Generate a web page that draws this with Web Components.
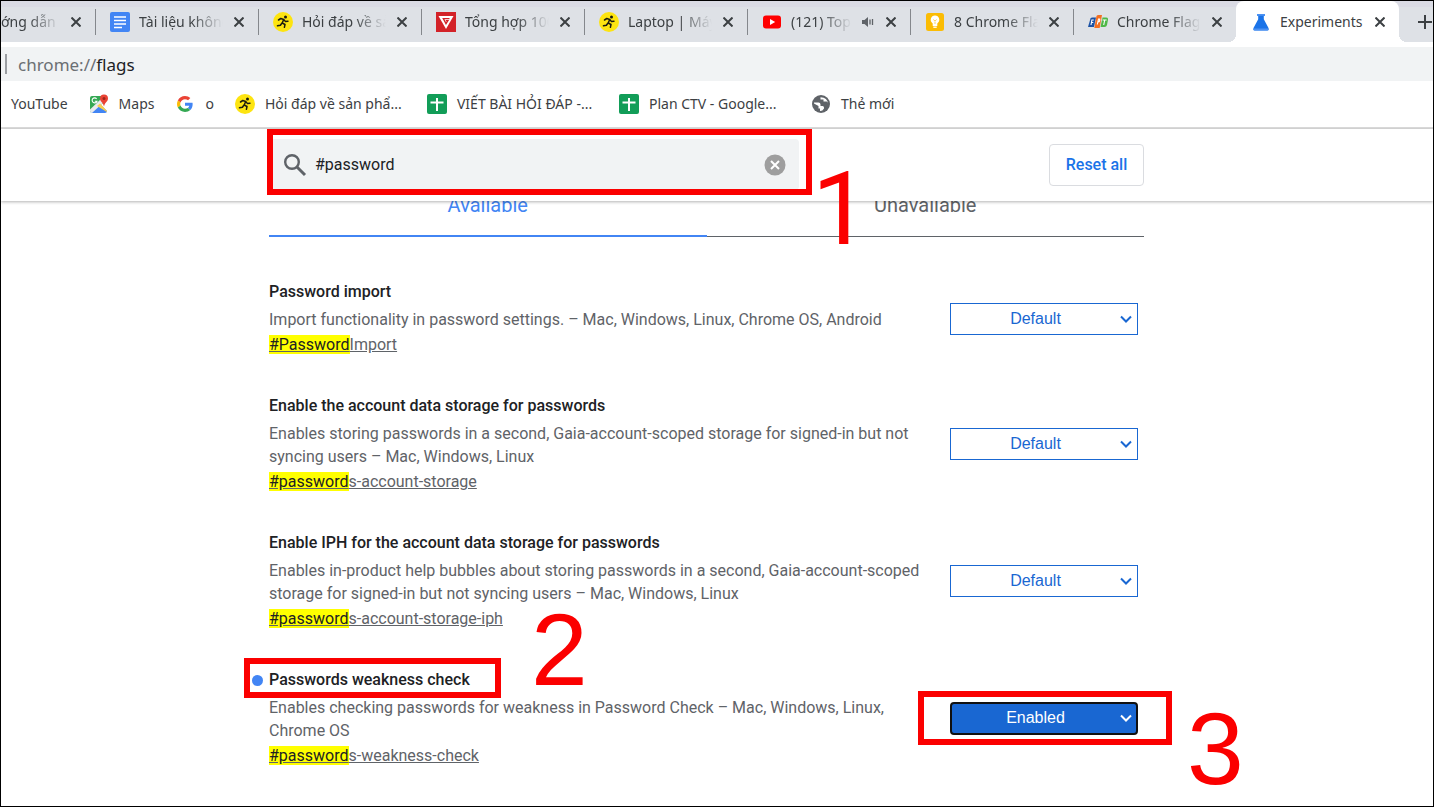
<!DOCTYPE html>
<html lang="vi">
<head>
<meta charset="utf-8">
<title>Experiments</title>
<style>
  html, body { margin: 0; height: 100%; }
  body { font-family: "Noto Sans", "Open Sans", sans-serif; font-size: 14px; color: #3c4043; background: #fff; }
</style>
</head>
<body>
<browser-window>
  <tab-strip slot="tabs">
    <browser-tab class="cut" cut>ớng dẫn t</browser-tab>
    <browser-tab icon="docs">Tài liệu không</browser-tab>
    <browser-tab icon="runner">Hỏi đáp về sản</browser-tab>
    <browser-tab icon="shield">Tổng hợp 100</browser-tab>
    <browser-tab icon="runner">Laptop | Máy tính</browser-tab>
    <browser-tab icon="youtube" audio>(121) Top</browser-tab>
    <browser-tab icon="bulb">8 Chrome Flags</browser-tab>
    <browser-tab icon="fpt">Chrome Flags</browser-tab>
    <browser-tab icon="flask" active>Experiments</browser-tab>
  </tab-strip>
  <address-bar slot="address" scheme="chrome://" host="flags"></address-bar>
  <bookmark-bar slot="bookmarks">
    <bookmark-link>YouTube</bookmark-link>
    <bookmark-link icon="maps">Maps</bookmark-link>
    <bookmark-link icon="google">o</bookmark-link>
    <bookmark-link icon="runner" wide>Hỏi đáp về sản phẩ...</bookmark-link>
    <bookmark-link icon="sheets" wide>VIẾT BÀI HỎI ĐÁP -...</bookmark-link>
    <bookmark-link icon="sheets" wide>Plan CTV - Google...</bookmark-link>
    <bookmark-link icon="globe">Thẻ mới</bookmark-link>
  </bookmark-bar>
  <flags-page>
    <flag-row heading="Password import" match="#Password" rest="Import" value="Default">Import functionality in password settings. – Mac, Windows, Linux, Chrome OS, Android</flag-row>
    <flag-row heading="Enable the account data storage for passwords" match="#password" rest="s-account-storage" value="Default">Enables storing passwords in a second, Gaia-account-scoped storage for signed-in but not syncing users – Mac, Windows, Linux</flag-row>
    <flag-row heading="Enable IPH for the account data storage for passwords" match="#password" rest="s-account-storage-iph" value="Default">Enables in-product help bubbles about storing passwords in a second, Gaia-account-scoped storage for signed-in but not syncing users – Mac, Windows, Linux</flag-row>
    <flag-row heading="Passwords weakness check" match="#password" rest="s-weakness-check" value="Enabled" changed>Enables checking passwords for weakness in Password Check – Mac, Windows, Linux, Chrome OS</flag-row>
  </flags-page>
</browser-window>

<script>
const ICONS = {
  docs: `<rect width="20" height="20" rx="2" fill="#4285f4"/><path d="M4 5h12M4 8.500h12M4 12h12M4 15.500h8" stroke="#fff" stroke-width="1.700"/>`,
  runner: `<circle cx="10" cy="10" r="10" fill="#fde410"/><circle cx="12.500" cy="5" r="1.500" fill="#1b1b10"/><path d="M5.500 8 7.800 6.500l2.900 1-1.500 3.500 2.800 1.500-.6 2.800M9 11 7.400 13.300 4.500 13.800M10.900 7.600l1.600 2 2.500-.4" fill="none" stroke="#1b1b10" stroke-width="1.500" stroke-linejoin="round" stroke-linecap="round"/>`,
  shield: `<rect width="20" height="20" fill="#d32228"/><path d="M2.500 4h15L10 17z" fill="#fff"/><path d="M13.500 6.600H7.300l2.700 5 1.900-3H9.800" fill="none" stroke="#d32228" stroke-width="1.300"/>`,
  youtube: `<rect x="1" y="3.500" width="18" height="13" rx="3" fill="#f00"/><path d="m8 7 5.200 3L8 13z" fill="#fff"/>`,
  bulb: `<rect x="1" y="1" width="18" height="18" rx="2.500" fill="#fbbc04"/><path d="M10 3.500a4.300 4.300 0 0 0-2.300 7.900V14h4.600v-2.600A4.300 4.300 0 0 0 10 3.500z" fill="#fff"/><path d="M8.300 7.500 10 9l1.700-1.500M10 9.500V12" stroke="#fdd663" stroke-width="1" fill="none"/><path d="M8.300 15.200h3.400" stroke="#fff" stroke-width="1.300"/>`,
  fpt: `<path d="M2.500 6.500Q3 5.500 4.500 5.500H8L6 15H0z" fill="#1c52a5"/><path d="M8.500 4Q9 3 10.500 3H14l-2.300 13H6.300z" fill="#f36f21"/><path d="M14.500 5.500H18Q20.300 5.500 20 7.500L19 13q-.5 2-2.500 2h-4z" fill="#4fb848"/><path d="M5.800 8H3.900l-.9 5M3.500 10.500h1.800M9.300 12.500l1.200-5.500h1.200q.5 2.500-1.700 3M14.600 8h4M16.700 8l-1 5" stroke="#fff" stroke-width="1.100" fill="none"/>`,
  flask: `<path d="M6 2h8v1.800h-1.200V7.200L17.500 16q.5 2-1 2.500h-13Q2 18 2.500 16L7.200 7.200V3.800H6z" fill="#1a73e8"/><path d="M6 2h8v1.800H6zM2.400 16.500h15.200l.2 1q0 1-1.300 1h-13q-1.300 0-1.300-1z" fill="#4c92f3"/>`,
  maps: `<path d="M3 2h9l4 6-6 4-9 6.500V4q0-2 2-2z" fill="#34a853"/><path d="m2 18 8.500-8.500L18 17q0 2-2 2H3q-1 0-1-1z" fill="#4285f4"/><path d="M1 15.500 12.500 4.500l3 3L3 19q-2 0-2-2z" fill="#e8eaed"/><path d="m8 12 3-2.500L18 17v1z" fill="#fbd04b"/><path d="M7.600 4.800A2.500 2.500 0 1 0 8 7.200H5.800" fill="none" stroke="#fff" stroke-width="1.100"/><path d="M15 .5a4 4 0 0 0-4 4c0 3 3 3.500 4 8 1-4.500 4-5 4-8a4 4 0 0 0-4-4z" fill="#ea4335"/><circle cx="15" cy="4.500" r="1.500" fill="#9d261b"/>`,
  google: `<g transform="translate(2 2) scale(.333)"><path fill="#EA4335" d="M24 9.500c3.540 0 6.710 1.220 9.210 3.600l6.850-6.850C35.900 2.380 30.470 0 24 0 14.620 0 6.510 5.380 2.560 13.220l7.980 6.190C12.430 13.720 17.740 9.500 24 9.500z"/><path fill="#4285F4" d="M46.980 24.550c0-1.570-.15-3.090-.38-4.550H24v9.020h12.940c-.58 2.960-2.260 5.480-4.780 7.180l7.730 6c4.510-4.180 7.090-10.360 7.090-17.650z"/><path fill="#FBBC05" d="M10.530 28.590c-.48-1.450-.76-2.990-.76-4.590s.27-3.140.76-4.590l-7.980-6.190C.92 16.460 0 20.120 0 24c0 3.880.92 7.540 2.560 10.780l7.970-6.190z"/><path fill="#34A853" d="M24 48c6.480 0 11.930-2.130 15.890-5.810l-7.730-6c-2.150 1.450-4.920 2.300-8.160 2.300-6.260 0-11.570-4.220-13.470-9.910l-7.980 6.190C6.510 42.620 14.620 48 24 48z"/></g>`,
  sheets: `<rect width="20" height="20" rx="2" fill="#129d58"/><path d="M10 4v13M3.500 8.500h13" stroke="#fff" stroke-width="2"/>`,
  globe: `<circle cx="10" cy="10" r="9" fill="#5f6368"/><path d="M3 8.500h4.500q2 0 2 2v1.500h2q1.500 0 1.500 1.500v1q-1.500 2.700-4 2.500v-2.500H7.500V12L3 9.500zM9.500 3.200v2.300h3v2h3.200q1 .7 1.300 2Q16.500 3.500 9.500 3.200z" fill="#fff"/>`
};
const svgIcon = name => `<svg class="icon" viewBox="0 0 20 20" width="20" height="20" aria-hidden="true">${ICONS[name] || ''}</svg>`;

class Base extends HTMLElement {
  connectedCallback() {
    if (this.shadowRoot) return;
    const t = document.createElement('template');
    t.innerHTML = `<style>*{box-sizing:border-box}</style>` + this.view();
    this.attachShadow({ mode: 'open' }).append(t.content.cloneNode(true));
  }
}

customElements.define('browser-window', class extends Base {
  view() { return `<style>
    :host { display: flex; flex-direction: column; box-sizing: border-box; height: 100vh; border: 1px solid #000; overflow: hidden; }
    main { flex: 1; min-height: 0; }
    </style>
    <slot name="tabs"></slot><slot name="address"></slot><slot name="bookmarks"></slot><main><slot></slot></main>`; }
});

customElements.define('tab-strip', class extends Base {
  view() { return `<style>
    :host { display: flex; flex: none; height: 41px; overflow: hidden; background: linear-gradient(#dadbe4 6px, #dee1e6 6px); }
    ::slotted(browser-tab) { flex: 0 0 163px; min-width: 0; }
    ::slotted(.cut) { flex-basis: 94px; }
    button { flex: none; border: 0; background: none; padding: 0 18px; margin: 0; }
    svg { display: block; }
    </style>
    <slot></slot>
    <button aria-label="New tab"><svg width="16" height="16" viewBox="0 0 16 16"><path d="M8 1v14M1 8h14" stroke="#3c4043" stroke-width="2"/></svg></button>`; }
});

customElements.define('browser-tab', class extends Base {
  view() {
    return `<style>
    :host { position: relative; display: flex; box-sizing: border-box; align-items: center; gap: 9px; padding: 0 12px 0 14px; border-left: 1px solid transparent; background: linear-gradient(#84878c, #84878c) 0 8px / 1px 26px no-repeat border-box; }
    :host([cut]) { padding-left: 0; border: 0; background: none; }
    :host([active]) { background: #fff; border-radius: 8px 8px 0 0; z-index: 1; }
    :host([active])::before, :host([active])::after { content: ""; position: absolute; bottom: 0; width: 8px; height: 8px; }
    :host([active])::before { left: -9px; background: radial-gradient(circle at 0 0, transparent 8px, #fff 8px); }
    :host([active])::after { right: -8px; background: radial-gradient(circle at 100% 0, transparent 8px, #fff 8px); }
    .icon { flex: none; }
    .title { flex: 1; min-width: 0; overflow: hidden; white-space: nowrap; line-height: 24px; mask-image: linear-gradient(to left, transparent, #000 32px); }
    :host([active]) .title { mask-image: none; }
    button { flex: none; width: 14px; height: 14px; padding: 2px; border: 0; background: none; }
    svg { display: block; flex: none; }
    </style>
    ${this.hasAttribute('cut') ? '' : svgIcon(this.getAttribute('icon'))}
    <span class="title"><slot></slot></span>
    ${this.hasAttribute('audio') ? `<svg width="14" height="12" viewBox="0 0 14 12"><path d="M1 4h2.500L7 1v10L3.500 8H1z" fill="#5f6368"/><path d="M9 3.500v5M11.500 3v6" stroke="#5f6368" stroke-width="1.300"/></svg>` : ''}
    <button aria-label="Close tab"><svg width="10" height="10" viewBox="0 0 10 10"><path d="m.5.5 9 9m0-9-9 9" stroke="#3c4043" stroke-width="2"/></svg></button>`;
  }
});

customElements.define('address-bar', class extends Base {
  view() { return `<style>
    :host { display: flex; flex: none; align-items: center; gap: 11px; height: 34px; margin-top: 5px; padding-left: 4px; background: #f1f3f4; font-size: 17px; color: #6b6f73; }
    i { width: 2px; height: 20px; background: #9b9ea2; }
    b { font-weight: 400; color: #202124; }
    </style><i></i><span>${this.getAttribute('scheme')}<b>${this.getAttribute('host')}</b></span>`; }
});

customElements.define('bookmark-bar', class extends Base {
  view() { return `<style>
    :host { display: flex; flex: none; box-sizing: border-box; align-items: center; gap: 21px; height: 48px; padding-left: 10px; border-bottom: 2px solid #dcdcdc; }
    </style><slot></slot>`; }
});

customElements.define('bookmark-link', class extends Base {
  view() { return `<style>
    :host { display: block; }
    :host([wide]) { min-width: 171px; }
    a { display: flex; align-items: center; gap: 10px; color: inherit; text-decoration: none; white-space: nowrap; line-height: 24px; }
    </style><a href="#">${this.hasAttribute('icon') ? svgIcon(this.getAttribute('icon')) : ''}<slot></slot></a>`; }
});

/* Red frame around its host's positioned parent, with a step number beside it. */
customElements.define('step-mark', class extends Base {
  view() { return `<style>
    :host { position: absolute; z-index: 3; border: 6px solid #fb0000; pointer-events: none; }
    span { position: absolute; left: var(--num-x); top: var(--num-y); font: 102px/104px "Liberation Sans", Arial, sans-serif; color: #fb0000; }
    :host([plain]) span { font-family: Roboto, sans-serif; }
    </style><span><slot></slot></span>`; }
});

customElements.define('flags-page', class extends Base {
  view() { return `<style>
    :host { display: block; font-family: Roboto, sans-serif; }
    .column { max-width: 875px; margin: 0 auto; }
    header { position: relative; z-index: 2; background: #fff; padding: 10px 21px 11px 0; box-shadow: 0 1px 3px rgba(0,0,0,.3); }
    header .column { display: flex; align-items: center; justify-content: space-between; }
    .search { position: relative; display: flex; align-items: center; gap: 8px; width: 530px; height: 51px; padding: 0 13px 0 14px; background: #f1f3f4; border-radius: 4px; }
    input { flex: 1; min-width: 0; padding: 0; border: 0; outline: 0; background: none; font: 16px/24px Roboto, sans-serif; color: #202124; }
    .clear { border: 0; padding: 0; background: none; }
    svg { display: block; flex: none; }
    .search step-mark { inset: -10px -13px -5px -2px; --num-x: 539px; --num-y: 22px; }
    .reset { height: 42px; width: 95px; padding: 0; border: 1px solid #dadce0; border-radius: 4px; background: #fff; color: #1a73e8; font: 500 16px/24px Roboto, sans-serif; white-space: nowrap; }
    .body { padding-right: 21px; }
    nav { display: flex; margin-top: -18px; }
    nav a { flex: 1; height: 54px; padding-top: 10px; border-bottom: 1px solid #5f6368; text-align: center; text-decoration: none; font-size: 20px; line-height: 24px; color: #5f6368; }
    nav a.on { border-bottom: 2px solid #4285f4; color: #4285f4; }
    .rows { display: flex; flex-direction: column; gap: 37px; padding-top: 43px; }
    </style>
    <header><div class="column">
      <div class="search">
        <svg width="24" height="24" viewBox="0 0 24 24"><circle cx="9" cy="9" r="6.800" fill="none" stroke="#5f6368" stroke-width="2.400"/><path d="m14 14 8 8" stroke="#5f6368" stroke-width="3"/></svg>
        <input type="text" value="#password" aria-label="Search flags">
        <button class="clear" aria-label="Clear search"><svg width="22" height="22" viewBox="0 0 22 22"><circle cx="11" cy="11" r="10.500" fill="#9e9e9e"/><path d="m7 7 8 8m0-8-8 8" stroke="#fff" stroke-width="2"/></svg></button>
        <step-mark plain>1</step-mark>
      </div>
      <button class="reset">Reset all</button>
    </div></header>
    <div class="body"><div class="column">
      <nav><a class="on" href="#available">Available</a><a href="#unavailable">Unavailable</a></nav>
      <div class="rows"><slot></slot></div>
    </div></div>`; }
});

customElements.define('flag-row', class extends Base {
  view() {
    const a = n => this.getAttribute(n), changed = this.hasAttribute('changed');
    return `<style>
    :host { display: flex; align-items: center; justify-content: space-between; gap: 20px; padding-right: 6px; font-size: 16px; color: #5f6368; }
    .text { flex: 1; min-width: 0; }
    h3 { position: relative; margin: 0 0 4px; font-size: 16px; font-weight: 500; line-height: 24px; color: #202124; }
    .dot { position: absolute; left: -17px; top: 7px; width: 11px; height: 11px; border-radius: 50%; background: #4285f4; }
    p { margin: 0 0 2px; line-height: 23px; }
    a { display: block; width: fit-content; line-height: 24px; color: inherit; }
    mark { background: #ff0; color: #202124; }
    .pick { position: relative; flex: none; width: 188px; }
    select { display: block; width: 100%; height: 32px; padding: 0 17px 0 0; appearance: none; border: 1px solid #1967d2; border-radius: 0; background: #fff; color: #1967d2; font: 16px/24px "Liberation Sans", Arial, sans-serif; text-align: center; text-align-last: center; }
    svg { position: absolute; right: 6px; top: 12px; color: #1967d2; pointer-events: none; }
    :host([changed]) select { height: 33px; border: 2px solid #101010; border-radius: 4px; background: #1967d2; color: #fff; }
    :host([changed]) svg { color: #fff; }
    h3 step-mark { left: -25px; top: -10px; width: 257px; height: 40px; box-sizing: border-box; --num-x: 281px; --num-y: -66px; }
    .pick step-mark { inset: -11px -34px -10px -32px; --num-x: 263px; --num-y: 0px; }
    </style>
    <div class="text">
      <h3>${changed ? '<span class="dot"></span>' : ''}<label for="state">${a('heading')}</label>${changed ? '<step-mark>2</step-mark>' : ''}</h3>
      <p><slot></slot></p>
      <a href="${a('match')}${a('rest')}"><mark>${a('match')}</mark>${a('rest')}</a>
    </div>
    <div class="pick">
      <select id="state">${['Default', 'Enabled', 'Disabled'].map(o => `<option${o === a('value') ? ' selected' : ''}>${o}</option>`).join('')}</select>
      <svg width="12" height="9" viewBox="0 0 12 9"><path d="m1 1.500 5 5 5-5" fill="none" stroke="currentColor" stroke-width="2"/></svg>
      ${changed ? '<step-mark>3</step-mark>' : ''}
    </div>`;
  }
});
</script>
</body>
</html>
